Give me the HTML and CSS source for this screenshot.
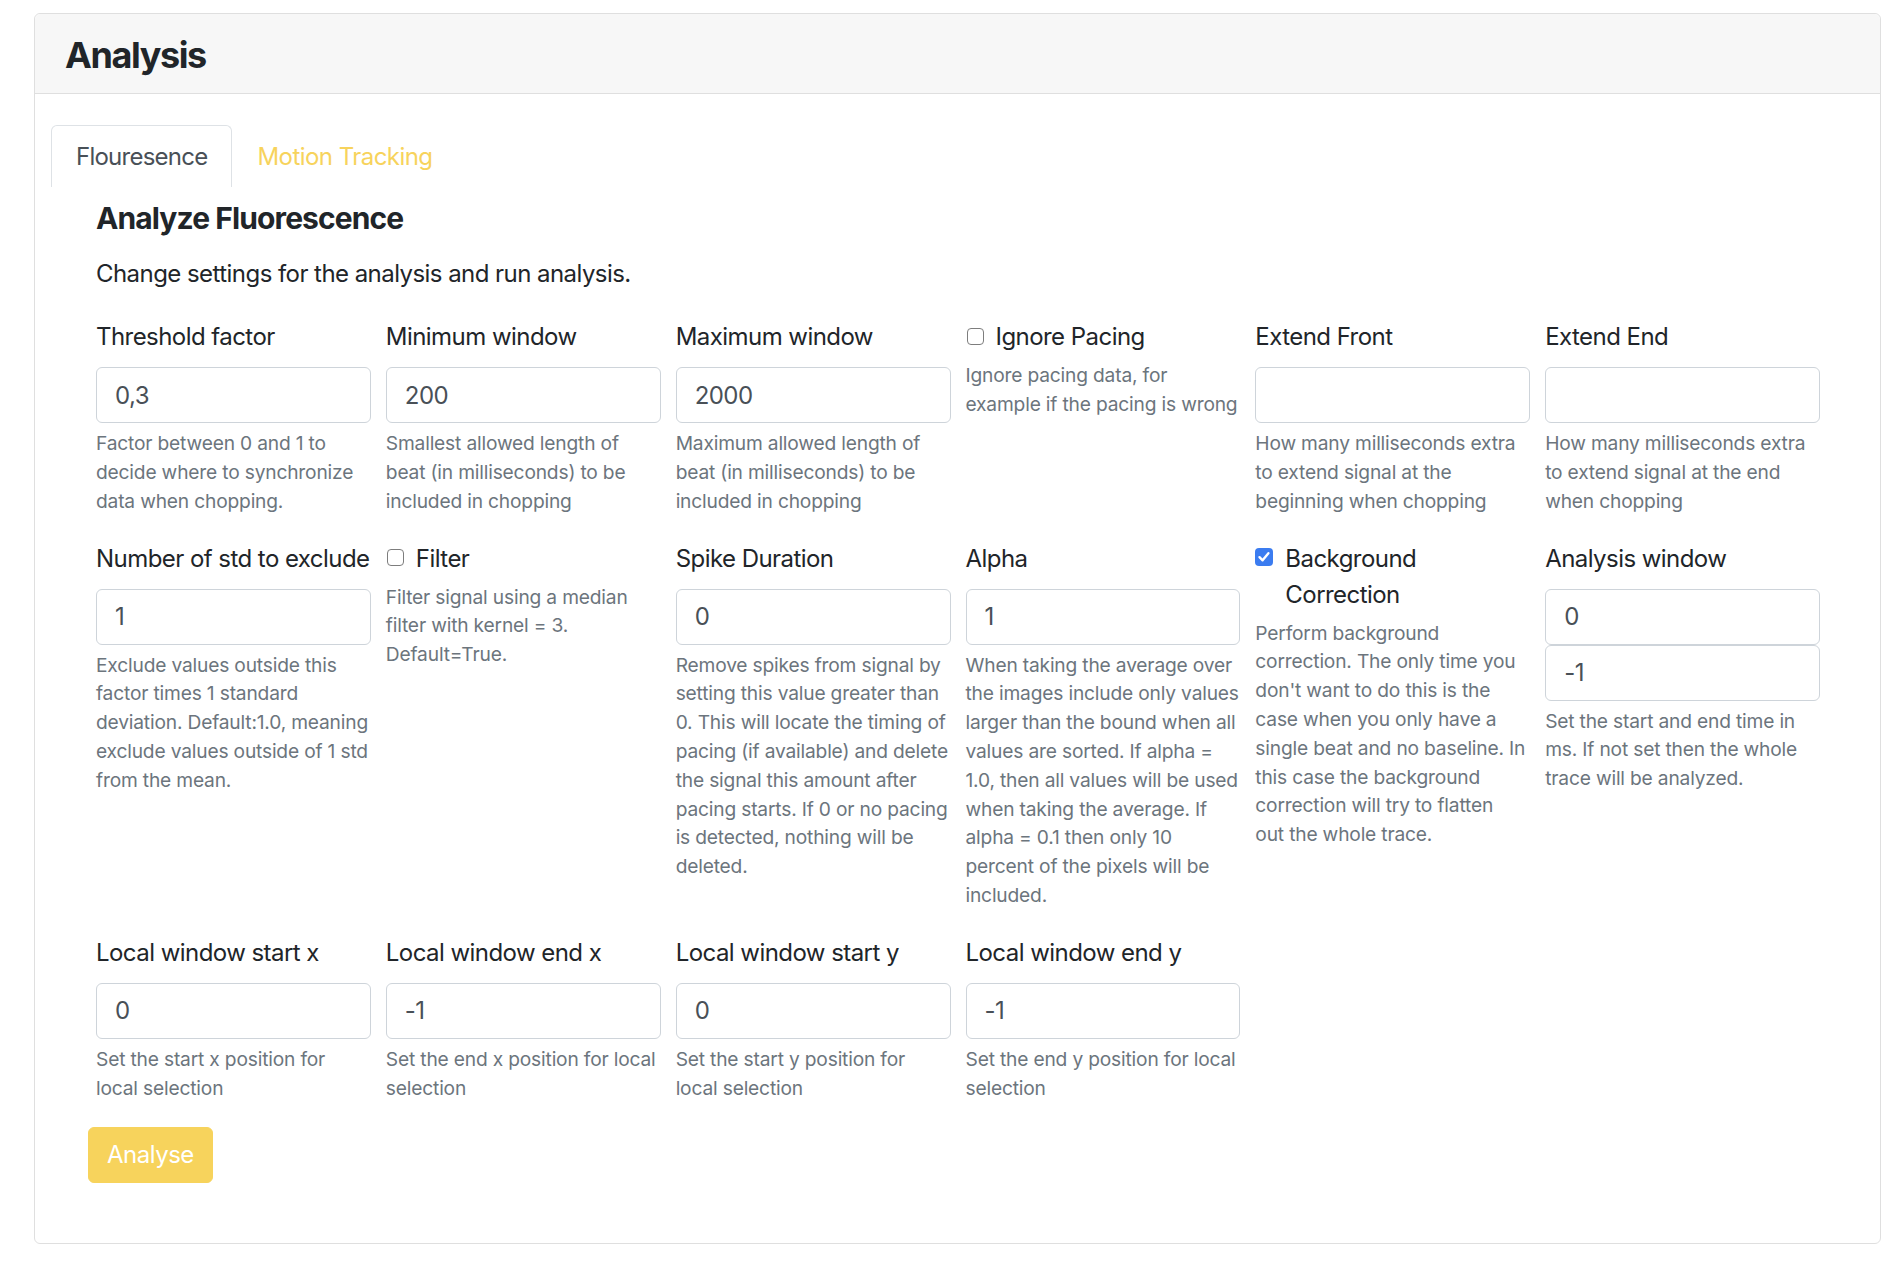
FILE: index.html
```html
<!DOCTYPE html>
<html lang="en">
<head>
<meta charset="utf-8">
<title>Analysis</title>
<link rel="stylesheet" href="styles.css">
</head>
<body>
<div class="page">
  <div class="card">
    <div class="card-header">
      <h4 class="card-title">Analysis</h4>
    </div>
    <div class="card-body">
      <ul class="nav-tabs">
        <li><a class="nav-link active">Flouresence</a></li>
        <li><a class="nav-link">Motion Tracking</a></li>
      </ul>
      <div class="tab-pane">
        <h5 class="pane-title">Analyze Fluorescence</h5>
        <p class="lead-text">Change settings for the analysis and run analysis.</p>
        <form class="analysis-form">
          <div class="form-row">
            <div class="form-group">
              <label class="form-label">Threshold factor</label>
              <input class="form-control" type="text" value="0,3">
              <small class="form-text">Factor between 0 and 1 to decide where to synchronize data when chopping.</small>
            </div>
            <div class="form-group">
              <label class="form-label">Minimum window</label>
              <input class="form-control" type="text" value="200">
              <small class="form-text">Smallest allowed length of beat (in milliseconds) to be included in chopping</small>
            </div>
            <div class="form-group">
              <label class="form-label">Maximum window</label>
              <input class="form-control" type="text" value="2000">
              <small class="form-text">Maximum allowed length of beat (in milliseconds) to be included in chopping</small>
            </div>
            <div class="form-group">
              <div class="form-check">
                <span class="check-box"></span>
                <label class="check-label">Ignore Pacing</label>
              </div>
              <small class="form-text">Ignore pacing data, for example if the pacing is wrong</small>
            </div>
            <div class="form-group">
              <label class="form-label">Extend Front</label>
              <input class="form-control" type="text" value="">
              <small class="form-text">How many milliseconds extra to extend signal at the beginning when chopping</small>
            </div>
            <div class="form-group">
              <label class="form-label">Extend End</label>
              <input class="form-control" type="text" value="">
              <small class="form-text">How many milliseconds extra to extend signal at the end when chopping</small>
            </div>
          </div>
          <div class="form-row">
            <div class="form-group">
              <label class="form-label">Number of std to exclude</label>
              <input class="form-control" type="text" value="1">
              <small class="form-text">Exclude values outside this factor times 1 standard deviation. Default:1.0, meaning exclude values outside of 1 std from the mean.</small>
            </div>
            <div class="form-group">
              <div class="form-check">
                <span class="check-box"></span>
                <label class="check-label">Filter</label>
              </div>
              <small class="form-text">Filter signal using a median filter with kernel = 3. Default=True.</small>
            </div>
            <div class="form-group">
              <label class="form-label">Spike Duration</label>
              <input class="form-control" type="text" value="0">
              <small class="form-text">Remove spikes from signal by setting this value greater than 0. This will locate the timing of pacing (if available) and delete the signal this amount after pacing starts. If 0 or no pacing is detected, nothing will be deleted.</small>
            </div>
            <div class="form-group">
              <label class="form-label">Alpha</label>
              <input class="form-control" type="text" value="1">
              <small class="form-text">When taking the average over the images include only values larger than the bound when all values are sorted. If alpha = 1.0, then all values will be used when taking the average. If alpha = 0.1 then only 10 percent of the pixels will be included.</small>
            </div>
            <div class="form-group">
              <div class="form-check">
                <span class="check-box checked"><svg viewBox="0 0 18 18" width="18" height="18"><path d="M4.5 9.2 L7.6 12.3 L13.4 5.2" fill="none" stroke="#fff" stroke-width="2.4" stroke-linecap="round" stroke-linejoin="round"/></svg></span>
                <label class="check-label">Background Correction</label>
              </div>
              <small class="form-text">Perform background correction. The only time you don't want to do this is the case when you only have a single beat and no baseline. In this case the background correction will try to flatten<br>out the whole trace.</small>
            </div>
            <div class="form-group">
              <label class="form-label">Analysis window</label>
              <input class="form-control" type="text" value="0">
              <input class="form-control" type="text" value="-1">
              <small class="form-text">Set the start and end time in ms. If not set then the whole trace will be analyzed.</small>
            </div>
          </div>
          <div class="form-row">
            <div class="form-group">
              <label class="form-label">Local window start x</label>
              <input class="form-control" type="text" value="0">
              <small class="form-text">Set the start x position for local selection</small>
            </div>
            <div class="form-group">
              <label class="form-label">Local window end x</label>
              <input class="form-control" type="text" value="-1">
              <small class="form-text">Set the end x position for local selection</small>
            </div>
            <div class="form-group">
              <label class="form-label">Local window start y</label>
              <input class="form-control" type="text" value="0">
              <small class="form-text">Set the start y position for local selection</small>
            </div>
            <div class="form-group">
              <label class="form-label">Local window end y</label>
              <input class="form-control" type="text" value="-1">
              <small class="form-text">Set the end y position for local selection</small>
            </div>
          </div>
          <button class="btn" type="button">Analyse</button>
        </form>
      </div>
    </div>
  </div>
</div>
</body>
</html>
```
FILE: styles.css
```css
html, body {
  margin: 0;
  padding: 0;
  background: #fff;
}
body {
  font-family: Inter, "Liberation Sans", Arial, sans-serif;
  font-size: 24px;
  line-height: 1.5;
  letter-spacing: -0.55px;
  color: #212529;
}
.page {
  padding: 13px 19px 0 34px;
}
.card {
  border: 1px solid #dfdfdf;
  border-radius: 6px;
  background: #fff;
}
.card-header {
  background: #f7f7f7;
  border-bottom: 1px solid #dfdfdf;
  border-radius: 6px 6px 0 0;
  padding: 20px 30px 16px;
}
.card-title {
  margin: 0;
  font-size: 36px;
  font-weight: 700;
  line-height: 1.2;
  letter-spacing: -1.4px;
}
.card-body {
  padding: 31px 0 60px;
}
.nav-tabs {
  list-style: none;
  margin: 0;
  padding: 0 0 0 16px;
  display: flex;
}
.nav-link {
  display: block;
  padding: 13px 24px 12px;
  border: 1px solid transparent;
  border-bottom: 0;
  border-radius: 6px 6px 0 0;
  line-height: 36px;
  color: #f7d35c;
}
.nav-link.active {
  color: #495057;
  border-color: #dee2e6;
  letter-spacing: -0.75px;
}
.tab-pane {
  padding: 0 60px 0 61px;
}
.pane-title {
  margin: 12.5px 0 20px;
  font-size: 30px;
  font-weight: 700;
  line-height: 1.2;
  letter-spacing: -0.9px;
}
.lead-text {
  margin: 0 0 27.5px;
}
.form-row {
  display: grid;
  grid-template-columns: repeat(6, 1fr);
  column-gap: 15px;
}
.form-group {
  margin-bottom: 25px;
  min-width: 0;
}
.form-label {
  display: block;
  margin-bottom: 12px;
  line-height: 36px;
  white-space: nowrap;
}
.form-control {
  display: block;
  width: 100%;
  box-sizing: border-box;
  height: 56px;
  margin: 0;
  padding: 9px 18px;
  font-family: inherit;
  font-size: 24px;
  line-height: 36px;
  letter-spacing: -0.55px;
  color: #495057;
  background: #fff;
  border: 1px solid #ced4da;
  border-radius: 6px;
}
.form-text {
  display: block;
  margin-top: 6px;
  font-size: 19.2px;
  line-height: 28.8px;
  letter-spacing: -0.18px;
  color: #6c757d;
}
.form-check {
  display: flex;
  align-items: flex-start;
}
.check-box {
  flex: none;
  width: 17px;
  height: 17px;
  margin: 8.5px 12px 0 1px;
  box-sizing: border-box;
  border: 1.5px solid #7d7d7d;
  border-radius: 4px;
  background: #fff;
  display: flex;
  align-items: center;
  justify-content: center;
}
.check-box.checked {
  width: 18px;
  height: 18px;
  margin: 7px 12px 0 0;
  border: 0;
  background: #3b7cf0;
}
.check-box svg {
  display: block;
}
.check-label {
  line-height: 36px;
}
.btn {
  display: inline-block;
  margin-left: -8px;
  height: 56px;
  padding: 9px 18px;
  font-family: inherit;
  font-size: 24px;
  line-height: 36px;
  letter-spacing: -0.5px;
  color: #fff;
  background: #f7d35c;
  border: 1px solid #f7d35c;
  border-radius: 6px;
}
```
